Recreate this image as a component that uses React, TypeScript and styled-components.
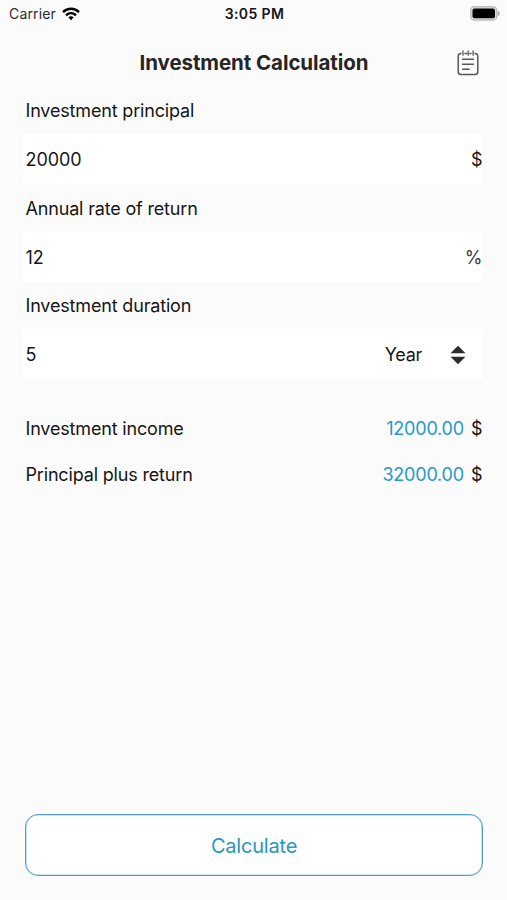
import React, { useState } from "react";
import styled, { createGlobalStyle } from "styled-components";

const GlobalStyle = createGlobalStyle`
  *, *::before, *::after { box-sizing: border-box; }
  body { margin: 0; background: #fbfbfb; }
`;

const Screen = styled.main`
  display: flex;
  flex-direction: column;
  width: 507px;
  height: 900px;
  background: #fbfbfb;
  color: #161616;
  font-family: Inter, "Liberation Sans", sans-serif;
  font-size: 18px;
  overflow: hidden;
`;

const StatusBar = styled.div`
  display: grid;
  grid-template-columns: 1fr auto 1fr;
  align-items: center;
  height: 27px;
  padding: 0 7px 0 9px;
  font-size: 14px;
`;

const Carrier = styled.div`
  display: flex;
  align-items: center;
  gap: 6px;
  color: #2b2b2b;
  letter-spacing: 0.15px;
`;

const Clock = styled.div`
  font-weight: 600;
  font-size: 14px;
  letter-spacing: 0.4px;
`;

const BatterySlot = styled.div`
  display: flex;
  justify-content: flex-end;
`;

const Header = styled.header`
  display: grid;
  grid-template-columns: 1fr auto 1fr;
  align-items: center;
  height: 71px;
  padding: 0 28px 0 29px;
`;

const Title = styled.h1`
  grid-column: 2;
  margin: 0;
  color: #262626;
  font-size: 20.5px;
  font-weight: 650;
  line-height: 26px;
  letter-spacing: -0.08px;
`;

const IconButton = styled.button`
  display: flex;
  justify-self: end;
  padding: 0;
  border: 0;
  background: none;
`;

const Form = styled.section`
  display: flex;
  flex-direction: column;
  padding: 0 24px 0 23px;
`;

const Label = styled.label`
  height: 26px;
  margin: 0 2px 10px;
  padding-left: 0.5px;
  line-height: 26px;
  letter-spacing: -0.17px;
`;

const Field = styled.div<{ $height?: number; $gap?: number }>`
  display: flex;
  align-items: center;
  height: ${(p) => p.$height ?? 50}px;
  margin-bottom: ${(p) => p.$gap ?? 12}px;
  padding: 0 0.5px 0 2.5px;
  background: #fff;
`;

const Input = styled.input`
  flex: 1;
  min-width: 0;
  padding: 0;
  border: 0;
  outline: 0;
  background: transparent;
  color: inherit;
  font: inherit;
  letter-spacing: -0.1px;
`;

const Unit = styled.span<{ $tone?: string }>`
  color: ${(p) => p.$tone ?? "#161616"};
`;

const Picker = styled.div`
  display: flex;
  align-items: center;
  gap: 28px;
  padding-right: 16.5px;
  letter-spacing: -0.3px;
`;

const Results = styled.section`
  display: flex;
  flex-direction: column;
  padding: 13px 24.5px 0 25.5px;
`;

const ResultRow = styled.div`
  display: flex;
  justify-content: space-between;
  align-items: center;
  height: 46.5px;
`;

const ResultLabel = styled.span`
  letter-spacing: -0.17px;
`;

const Amount = styled.span`
  display: flex;
  gap: 7px;
`;

const Value = styled.span`
  color: #2599c9;
  letter-spacing: -0.2px;
`;

const Footer = styled.footer`
  margin-top: auto;
  padding: 0 24px 24px 25px;
`;

const CalculateButton = styled.button`
  display: block;
  width: 100%;
  height: 62px;
  padding: 1px 0 0;
  border: 1px solid #519fc8;
  border-radius: 13px;
  background: #fff;
  box-shadow: inset 0 0 0 0.6px #9fd0e8;
  color: #2b94bf;
  font: 400 20px/26px Inter, "Liberation Sans", sans-serif;
  letter-spacing: -0.2px;
`;

const WifiIcon = () => (
  <svg width="18" height="14" viewBox="0 0 18 14" fill="none" stroke="#000" strokeWidth="2.4">
    <path d="M1 5.1C5.5.6 12.5.6 17 5.1" />
    <path d="M4 8.3c2.9-2.8 7.1-2.8 10 0" />
    <path d="M6.3 10.3c1.6-1.5 3.8-1.5 5.4 0L9 13.3Z" fill="#000" stroke="none" />
  </svg>
);

const BatteryIcon = () => (
  <svg width="30" height="15" viewBox="0 0 30 15">
    <rect x="0.8" y="0.8" width="25.9" height="13.2" rx="3.6" fill="#dedede" stroke="#bdbdbd" strokeWidth="1.4" />
    <rect x="2.5" y="2.5" width="22.5" height="9.8" rx="2" fill="#000" />
    <path d="M27.8 4.8c2.6 1 2.6 4.2 0 5.2Z" fill="#ababab" />
  </svg>
);

const NotesIcon = () => (
  <svg width="22" height="26" viewBox="0 0 22 26" fill="none" stroke="#575757" strokeWidth="1.5" strokeLinecap="round">
    <path d="M4 3.4C2.2 3.4 1.2 4.5 1.2 6.2v15.6c0 1.9 1 2.8 2.8 2.8h14c1.8 0 2.8-.9 2.8-2.8V6.2c0-1.7-1-2.8-2.8-2.8M8 3.4h1.8M12.8 3.4H14" />
    <path d="M6 1v4.2M11.2 1v4.2M16.1 1v4.2" strokeWidth="1.3" />
    <path d="M5.6 9.3h10.8M5.6 14.2h10.8M5.6 19.2h6.5" />
  </svg>
);

const SortIcon = () => (
  <svg width="16" height="20" viewBox="0 0 16 20" fill="#2b2b2b">
    <path d="M8 .8 15.5 8.3H.5Z" />
    <path d="M8 19.2 15.5 11.7H.5Z" />
  </svg>
);

export default function App() {
  const [principal, setPrincipal] = useState("20000");
  const [rate, setRate] = useState("12");
  const [duration, setDuration] = useState("5");
  const [income, setIncome] = useState(12000);
  const [total, setTotal] = useState(32000);

  const calculate = () => {
    const base = Number(principal);
    const earned = (base * Number(rate) * Number(duration)) / 100;
    setIncome(earned);
    setTotal(base + earned);
  };

  return (
    <Screen>
      <GlobalStyle />
      <StatusBar>
        <Carrier>
          Carrier
          <WifiIcon />
        </Carrier>
        <Clock>3:05 PM</Clock>
        <BatterySlot>
          <BatteryIcon />
        </BatterySlot>
      </StatusBar>
      <Header>
        <Title>Investment Calculation</Title>
        <IconButton aria-label="History">
          <NotesIcon />
        </IconButton>
      </Header>
      <Form>
        <Label htmlFor="principal">Investment principal</Label>
        <Field>
          <Input id="principal" value={principal} onChange={(e) => setPrincipal(e.target.value)} />
          <Unit>$</Unit>
        </Field>
        <Label htmlFor="rate">Annual rate of return</Label>
        <Field $gap={11}>
          <Input id="rate" value={rate} onChange={(e) => setRate(e.target.value)} />
          <Unit $tone="#3a3a3a">%</Unit>
        </Field>
        <Label htmlFor="duration">Investment duration</Label>
        <Field $height={51}>
          <Input id="duration" value={duration} onChange={(e) => setDuration(e.target.value)} />
          <Picker>
            <span>Year</span>
            <SortIcon />
          </Picker>
        </Field>
      </Form>
      <Results>
        <ResultRow>
          <ResultLabel>Investment income</ResultLabel>
          <Amount>
            <Value>{income.toFixed(2)}</Value>
            <Unit>$</Unit>
          </Amount>
        </ResultRow>
        <ResultRow>
          <ResultLabel>Principal plus return</ResultLabel>
          <Amount>
            <Value>{total.toFixed(2)}</Value>
            <Unit>$</Unit>
          </Amount>
        </ResultRow>
      </Results>
      <Footer>
        <CalculateButton onClick={calculate}>Calculate</CalculateButton>
      </Footer>
    </Screen>
  );
}
